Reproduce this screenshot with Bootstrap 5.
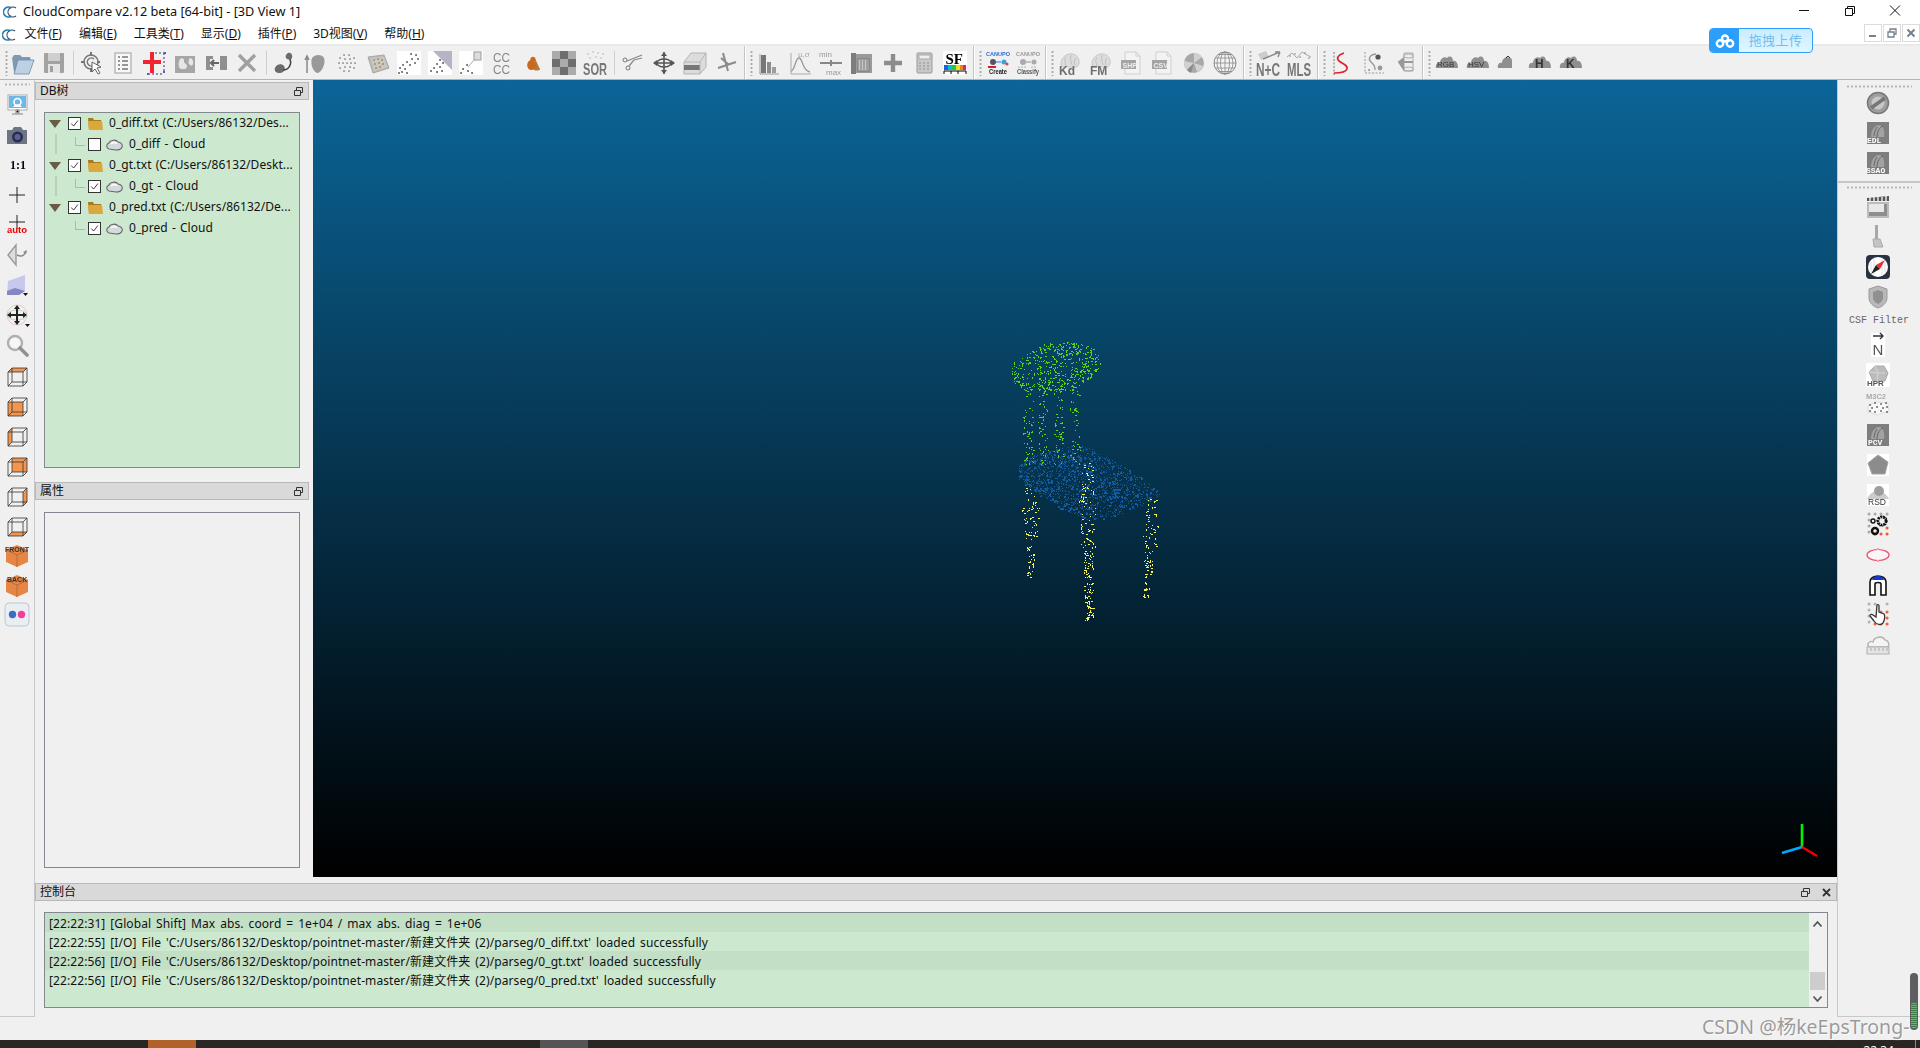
<!DOCTYPE html>
<html lang="zh">
<head>
  <meta charset="UTF-8" />
  <title>CloudCompare v2.12 beta [64-bit] - [3D View 1]</title>
  <link href="https://cdn.jsdelivr.net/npm/bootstrap@5.3.3/dist/css/bootstrap.min.css" rel="stylesheet">
  <style>
    html, body { height: 100%; }
    body {
      width: 1920px; height: 1048px; overflow: hidden; background: #f0f0f0; color: #111;
      font-family: "Noto Sans", "Noto Sans CJK SC", sans-serif; font-size: 12px; line-height: 1.2;
    }
    .ic { width: 24px; height: 24px; overflow: visible; display: block; filter: blur(.3px); }
    .title-row { height: 24px; background: #fff; padding-left: 3px; }
    .title-row .ttl { font-size: 12.7px; margin-left: 6px; color: #111; }
    .app-ic { width: 14px; height: 14px; flex: none; }
    .win-btn { position: absolute; top: 4px; width: 14px; height: 14px; }
    .menu-row { height: 22px; background: #fff; border-bottom: 2px solid #e9e9e9; padding-left: 2px; padding-top: 1px; }
    .menu-row .mi { padding: 0 8.5px; white-space: nowrap; }
    .menu-row u { text-underline-offset: 1px; }
    .top-tools { height: 34px; border-bottom: 1px solid #b4b4b4; padding-left: 4.500px; }
    .tbtn { width: 31px; flex: none; display: flex; align-items: center; justify-content: center; }
    .tbtn.narrow { width: 30px; }
    .sep-thin { width: 7px; flex: none; align-self: center; height: 24px; position: relative; }
    .sep-thin::after { content: ""; position: absolute; left: 3px; top: 0; bottom: 0; width: 1px; background: #cfcfcf; }
    .tool-break { width: 12px; flex: none; height: 100%; display: flex; padding-left: 2px; }
    .tool-break i { width: 1px; background: #c4c4c4; border-right: 1px solid #fff; display: block; box-sizing: content-box; }
    .grip-v { width: 3px; height: 26px; margin: 4px 0 0 4px;
      background: radial-gradient(circle, #a8a8a8 1px, transparent 1.2px) 0 0 / 3px 4px repeat-y; }
    .grip-h { height: 3px;
      background: radial-gradient(circle, #b4b4b4 1px, transparent 1.2px) 0 0 / 4px 3px repeat-x; }
    .work { height: 937px; }
    .left-tools { width: 35px; flex: none; border-right: 1px solid #c8c8c8; border-bottom: 1px solid #c8c8c8; }
    .left-tools .grip-h { margin: 3px 4px 4px 4px; }
    .left-tools .vbtn { height: 30px; display: flex; align-items: center; justify-content: center; }
    .right-tools { width: 83px; flex: none; border-left: 1px solid #c8c8c8; border-bottom: 1px solid #c8c8c8; }
    .right-tools .grip-h { margin: 0 8px; }
    .right-tools .vbtn { height: 30px; display: flex; align-items: center; justify-content: center; padding-right: 2px; }
    .right-tools .grp { padding-top: 5px; padding-bottom: 3px; }
    .right-tools .grp + .grp { border-top: 2px solid #c6c6c6; padding-top: 3px; }
    .right-tools .grp + .grp .grip-h { margin-bottom: 3px; }
    .csf { height: 18px; text-align: center; font: 10px/18px "Liberation Mono", monospace; color: #666; }
    .middle { width: 1802px; flex: none; }
    .upper { height: 797px; }
    .side-docks { width: 278px; flex: none; padding-top: 2px; }
    .dock-head { height: 18px; background: #d9d9d9; border: 1px solid #b8b8b8; padding: 0 4px;
      display: flex; align-items: center; justify-content: space-between; }
    .dock-head > span:first-child { padding-top: 1px; }
    .side-docks .dock-head { margin-right: 4px; }
    .dock-btn { width: 11px; height: 11px; display: block; }
    .dock-btn + .dock-btn { margin-left: 2px; }
    .tree-box { width: 256px; margin-left: 9px; border: 1px solid #828790; background: #cce8cf; }
    .tree-a { height: 356px; margin-top: 12px; margin-bottom: 14px; }
    .prop-box { height: 356px; margin-top: 12px; background: #f0f0f0; }
    .tree-row { height: 21px; display: flex; align-items: center; position: relative; white-space: nowrap; }
    .tree-row .arrow { width: 0; height: 0; margin-left: 4px; border: 6.5px solid transparent; border-top: 8px solid #6b5a45; border-bottom: 0; flex: none; }
    .cbx { width: 13px; height: 13px; border: 1px solid #333; background: #fff; flex: none; display: block; }
    .tree-row.p .cbx { margin-left: 7px; }
    .tree-row.c .cbx { margin-left: 43px; }
    .tree-row .lbl { margin-left: 6px; color: #111; letter-spacing: .05px; word-spacing: 1px; }
    .tree-row .fld { width: 16px; height: 14px; margin-left: 6px; flex: none; }
    .tree-row .cld { width: 17px; height: 12px; margin-left: 5px; flex: none; }
    .tree-row.c::before { content: ""; position: absolute; left: 30px; top: 3px; width: 10px; height: 9px;
      border-left: 1px solid #aabca8; border-bottom: 1px solid #aabca8; }
    .tree-row.v::after { content: ""; position: absolute; left: 10px; top: 0; width: 2px; height: 20px; background: #bcd0b8; }
    .view3d { flex: 1; position: relative; background: linear-gradient(to bottom, #0b6598, #000 100%); }
    .view3d svg { position: absolute; left: 0; top: 0; }
    .console-dock { height: 140px; padding-top: 6px; }
    .con-box { height: 96px; margin: 11px 9px 0 9px; border: 1px solid #828790; display: flex; background: #cce8cf; }
    .con-rows { flex: 1; }
    .con-line { height: 19px; padding: 1px 0 0 4px; line-height: 19px; white-space: nowrap; color: #111; letter-spacing: .09px; word-spacing: 1.7px; }
    .con-line.alt { background: #c3dfc6; }
    .con-scroll { width: 18px; background: #f0f0f0; position: relative; }
    .con-scroll .thumb { position: absolute; left: 1px; width: 15px; top: 59px; height: 18px; background: #cdcdcd; }
    .con-scroll svg { position: absolute; left: 3px; width: 11px; height: 8px; }
    .status-row { height: 23px; }
    .task-strip { height: 8px; background: #2a2624; overflow: hidden; color: #fff; }
    .task-orange { width: 48px; margin-left: 148px; background: #b0622a; }
    .task-gray { width: 48px; margin-left: 344px; background: #555; }
    .task-time { margin-left: auto; margin-right: 21px; font-size: 12px; line-height: 12px; margin-top: 5px; }
    .task-line { width: 1px; background: #8a8a8a; margin-right: 4px; }
    .upload-chip { position: absolute; left: 1709px; top: 28px; width: 104px; height: 25px; border: 1px solid #2b9ffb; border-radius: 4px;
      background: linear-gradient(to bottom, #c8edff, #e2f6ff); color: #74bdf0; font-size: 13px; overflow: hidden; display: flex; align-items: center; }
    .upload-chip .cap { width: 29px; height: 100%; background: #2b9ffb; flex: none; display: flex; align-items: center; justify-content: center; }
    .upload-chip .txt { flex: 1; text-align: center; letter-spacing: .4px; }
    .mdi-btns { position: absolute; top: 24px; right: 0; display: flex; gap: 1px; }
    .mdi-b { width: 18px; height: 18px; border: 1px solid #dcdcdc; background: #fff; display: flex; align-items: center; justify-content: center; }
    .mdi-b svg { width: 10px; height: 10px; }
    .watermark { position: absolute; left: 1702px; top: 1013px; font-size: 19.5px; line-height: 28px; color: rgba(125,125,125,.75);
      text-shadow: 1px 1px 1px rgba(255,255,255,.7); white-space: nowrap; }
    .vol-pill { position: absolute; left: 1910px; top: 973px; width: 8px; height: 57px; border-radius: 4px; background: #5e5e5e; padding: 30px 1px 2px; }
    .vol-pill div { height: 100%; background: repeating-linear-gradient(to bottom, #58c268 0 1px, #3d7a48 1px 2px); border-radius: 2px; }
  </style>
</head>
<body class="d-flex flex-column position-relative">

<div class="title-row d-flex align-items-center">
  <svg class="app-ic" viewBox="0 0 14 14"><path d="M13 3a5 5 0 1 0 0 8" fill="none" stroke="#3c4e5c" stroke-width="1.2"/><path d="M8.5 3a5 5 0 1 0 0 8" fill="none" stroke="#2d7fb5" stroke-width="1.7"/></svg>
  <span class="ttl">CloudCompare v2.12 beta [64-bit] - [3D View 1]</span>
</div>
<svg class="win-btn" style="left:1797px" viewBox="0 0 14 14"><path d="M2 6.5h10" stroke="#111" fill="none"/></svg>
<svg class="win-btn" style="left:1843px" viewBox="0 0 14 14"><path d="M2.5 4.5h7v7h-7zM4.5 4.5v-2h7v7h-2" stroke="#111" fill="none"/></svg>
<svg class="win-btn" style="left:1888px" viewBox="0 0 14 14"><path d="M2 1.5l10 10M12 1.5l-10 10" stroke="#111" fill="none"/></svg>

<div class="menu-row d-flex align-items-center">
  <svg class="app-ic" viewBox="0 0 14 14"><path d="M13 3a5 5 0 1 0 0 8" fill="none" stroke="#3c4e5c" stroke-width="1.2"/><path d="M8.5 3a5 5 0 1 0 0 8" fill="none" stroke="#2d7fb5" stroke-width="1.7"/></svg>
  <span class="mi">文件(<u>F</u>)</span>
  <span class="mi">编辑(<u>E</u>)</span>
  <span class="mi">工具类(<u>T</u>)</span>
  <span class="mi">显示(<u>D</u>)</span>
  <span class="mi">插件(<u>P</u>)</span>
  <span class="mi">3D视图(<u>V</u>)</span>
  <span class="mi">帮助(<u>H</u>)</span>
</div>

<div class="upload-chip">
  <span class="cap"><svg width="20" height="14" viewBox="0 0 20 14"><g fill="none" stroke="#fff" stroke-width="2.4"><circle cx="10" cy="4.5" r="3"/><circle cx="5" cy="9.5" r="3.2"/><circle cx="15" cy="9.5" r="3.2"/></g></svg></span>
  <span class="txt">拖拽上传</span>
</div>
<div class="mdi-btns">
  <span class="mdi-b"><svg viewBox="0 0 10 10"><path d="M1 8h7" stroke="#74808c" stroke-width="2"/></svg></span>
  <span class="mdi-b"><svg viewBox="0 0 10 10"><path d="M1 4h6v5H1zM3 4V1h6v5H7" stroke="#74808c" fill="none" stroke-width="1.3"/></svg></span>
  <span class="mdi-b"><svg viewBox="0 0 10 10"><path d="M1.5 1.5l7 7M8.5 1.5l-7 7" stroke="#74808c" stroke-width="2"/></svg></span>
</div>

<div class="top-tools d-flex align-items-center" id="topTools"></div>

<div class="work d-flex">
  <div class="left-tools" id="leftTools"></div>

  <div class="middle d-flex flex-column">
    <div class="upper d-flex">
      <div class="side-docks">
        <div class="dock-head"><span>DB树</span><svg class="dock-btn" viewBox="0 0 11 11"><path d="M1.5 4.5h6v5h-6zM3.5 4.5v-3h6v5h-2" fill="none" stroke="#333"/></svg></div>
        <div class="tree-box tree-a" id="dbTree"></div>
        <div class="dock-head"><span>属性</span><svg class="dock-btn" viewBox="0 0 11 11"><path d="M1.5 4.5h6v5h-6zM3.5 4.5v-3h6v5h-2" fill="none" stroke="#333"/></svg></div>
        <div class="tree-box prop-box"></div>
      </div>
      <div class="view3d">
        <svg width="1524" height="797" viewBox="313 80 1524 797" shape-rendering="crispEdges">
          <path id="ptsBlue" fill="#165a9e"/>
          <path id="ptsGreen" fill="#5cd414"/>
          <path id="ptsYellow" fill="#f4f056"/>
          <g shape-rendering="auto" stroke-width="2.6" fill="none">
            <path d="M1802 847V824" stroke="#00f000"/>
            <path d="M1802 847l15 9" stroke="#f00000"/>
            <path d="M1802 847l-20 6" stroke="#00a8ff"/>
          </g>
        </svg>
      </div>
    </div>
    <div class="console-dock">
      <div class="dock-head">
        <span>控制台</span>
        <span class="d-flex gap-2">
          <svg class="dock-btn" viewBox="0 0 11 11"><path d="M1.5 4.5h6v5h-6zM3.5 4.5v-3h6v5h-2" fill="none" stroke="#333"/></svg>
          <svg class="dock-btn" viewBox="0 0 11 11"><path d="M2 2l7 7M9 2l-7 7" fill="none" stroke="#333" stroke-width="1.8"/></svg>
        </span>
      </div>
      <div class="con-box">
        <div class="con-rows">
          <div class="con-line alt">[22:22:31] [Global Shift] Max abs. coord = 1e+04 / max abs. diag = 1e+06</div>
          <div class="con-line">[22:22:55] [I/O] File 'C:/Users/86132/Desktop/pointnet-master/新建文件夹 (2)/parseg/0_diff.txt' loaded successfully</div>
          <div class="con-line alt">[22:22:56] [I/O] File 'C:/Users/86132/Desktop/pointnet-master/新建文件夹 (2)/parseg/0_gt.txt' loaded successfully</div>
          <div class="con-line">[22:22:56] [I/O] File 'C:/Users/86132/Desktop/pointnet-master/新建文件夹 (2)/parseg/0_pred.txt' loaded successfully</div>
        </div>
        <div class="con-scroll">
          <svg style="top:7px" viewBox="0 0 11 8"><path d="M1.5 6.5 5.5 2l4 4.5" fill="none" stroke="#555" stroke-width="1.8"/></svg>
          <div class="thumb"></div>
          <svg style="top:82px" viewBox="0 0 11 8"><path d="M1.5 1.5 5.5 6l4-4.5" fill="none" stroke="#555" stroke-width="1.8"/></svg>
        </div>
      </div>
    </div>
  </div>

  <div class="right-tools" id="rightTools"></div>
</div>

<div class="status-row"></div>
<div class="task-strip d-flex">
  <div class="task-orange"></div>
  <div class="task-gray"></div>
  <div class="task-time">22:34</div>
  <div class="task-line"></div>
</div>

<div class="watermark">CSDN @杨keEpsTrong-</div>
<div class="vol-pill"><div></div></div>

<script>
const txt = (s, x, y, size, fill, weight, fam, len) =>
  `<text x="${x}" y="${y}" font-size="${size}" fill="${fill}" font-weight="${weight || 'bold'}" font-family="${fam || 'Liberation Sans'}"${len ? ` textLength="${len}" lengthAdjust="spacingAndGlyphs"` : ''}>${s}</text>`;
const dots = (d, c, w) => `<path d="${d}" stroke="${c || '#555'}" stroke-width="${w || 1.8}" stroke-linecap="round" fill="none"/>`;
const cubeWire = '<path d="M3 9h15v14H3zM7 5h15v14H7zM3 9l4-4M18 9l4-4M18 23l4-4M3 23l4-4" fill="none" stroke="#333" stroke-width=".8"/>';
const cube = shape => `<path d="${shape}" fill="#f2964f"/>` + cubeWire;
const brain = '<path d="M4 16C1 11 5 4 11 3c7-1 11 4 10 10l-2 3z" fill="#dcdcdc" stroke="#c8c8c8"/><path d="M8 6c-2 3-1 6 0 9M13 4c-1 4 0 7 1 10M18 7c-2 2-2 4-1 7" stroke="#c0c0c0" fill="none"/>';
const doc = t => `<path d="M5 1h11l4 4v18H5z" fill="#f3f3f3" stroke="#cfcfcf"/><path d="M16 1v4h4" fill="none" stroke="#cfcfcf"/><rect x="1" y="9" width="15" height="9" fill="#a4a4a4"/>` + txt(t, 2.5, 16.5, 7, '#eee');
const mtn = '<path d="M1 17c-1-4 2-6 4-5 0-4 4-7 7-5 3-3 6-1 6 3 3-1 5 2 5 7z" fill="#8f8f8f"/>';
const thumb = (t, x) => `<rect x="1" y="1" width="22" height="22" fill="#7e7e7e"/><path d="M5 16c0-6 3-12 8-12 4 0 6 5 5 12z" fill="#a2a2a2"/><path d="M11 16c0-6 3-10 6-11M8 15c0-4 2-7 3-9" stroke="#666" fill="none"/>` + txt(t, x, 22, 8, '#fff', 'bold', 'Liberation Mono');
const hexBox = '<path d="M12 2 23 7v12l-11 5L1 19V7z" fill="#e58646"/><path d="M12 12 23 7M12 12 1 7M12 12v12" stroke="#c06a30" fill="none"/>';
const icons = {
  folder: '<path d="M3 21 1 7l2-3h6l2 2h8l1 4z" fill="#7f9ab0"/><path d="M3 23 7 9h16l-5 14z" fill="#bcd2e4" stroke="#6a8aa6" stroke-width=".8"/>',
  save: '<rect x="2" y="2" width="20" height="20" rx="1" fill="#a2a2a2"/><rect x="6" y="2" width="12" height="8" fill="#cfcfcf"/><rect x="6" y="13" width="12" height="9" fill="#e4e4e4"/><rect x="8" y="15" width="3" height="6" fill="#a0a0a0"/>',
  cloudsel: '<circle cx="11" cy="11" r="7" fill="none" stroke="#777" stroke-width="1.5"/><path d="M11 1v4M11 17v4M1 11h4M17 11h3" stroke="#777" stroke-width="2"/><path d="M14 8a4 4 0 1 0 0 6" fill="none" stroke="#777" stroke-width="1.5"/><path d="M12 11l9 5-4 1 3 5-2 1-3-5-3 3z" fill="#fff" stroke="#555" stroke-width=".9"/>',
  list: '<rect x="4" y="2" width="16" height="20" fill="#f7f7f7" stroke="#9c9c9c"/><path d="M7 6h2M7 10h2M7 14h2M7 18h2M11 6h6M11 10h6M11 14h6M11 18h6" stroke="#777" stroke-width="1.6"/>',
  redcross: '<path d="M13 2h10M22 2v20M6 23h16" stroke="#33306a" stroke-dasharray="2 2" fill="none"/><path d="M8 1h4v8h7v4h-7v9H8v-9H1V9h7z" fill="#ee2530"/><path d="M22 1h2v2h-2zM21 20h2v2h-2zM5 22h2v2H5z" fill="#5a5ad0"/>',
  merge: '<rect x="2" y="5" width="20" height="17" fill="#a6a6a6"/><path d="M7 8c2-2 5 0 4 2s4 3 3 6-7 3-8 0 0-6 1-8zM17 7c2 0 4 3 3 6s-3 1-4 0 0-6 1-6z" fill="#e6e6e6"/>',
  leave: '<path d="M2 5h7v3H6v8h3v3H2zM23 5h-7v14h7V5z" fill="#8f8f8f"/><path d="M15 12H7M10 9l-3 3 3 3" stroke="#666" stroke-width="2" fill="none"/>',
  x: '<path d="M4 4l16 16M20 4 4 20" stroke="#a0a0a0" stroke-width="3.4"/>',
  blobs: '<path d="M15 2c3-1 5 2 4 5-1 2-4 2-6 0-1-2 0-4 2-5zM2 17c1-4 7-5 9-2 2 3 0 7-4 7s-6-2-5-5z" fill="#6c6c6c"/><path d="M17 8c2 5-1 11-7 11" stroke="#444" fill="none" stroke-width="1.5"/>',
  upblob: '<path d="M3 22V7M1 9l2-4 2 4" stroke="#888" fill="none" stroke-width="1.5"/><path d="M8 7c3-4 10-4 12 0 2 5-2 14-6 15-5 0-8-10-6-15z" fill="#999"/>',
  ringdots: dots('M9 4h.1M14 4h.1M5 7h.1M10 8h.1M15 8h.1M19 7h.1M4 12h.1M8 12h.1M12 12h.1M16 12h.1M20 12h.1M5 17h.1M10 16h.1M15 16h.1M19 17h.1M9 20h.1M14 20h.1', '#777', 1.7),
  tiltdots: '<path d="M2 6l16-2 5 13-16 5z" fill="#bdbdbd" stroke="#a5a5a5"/><path d="M5 7l13-1 3 10-13 4z" fill="#cfc6b8"/>' + dots('M8 9h.1M12 8h.1M16 9h.1M9 13h.1M13 12h.1M17 13h.1M10 17h.1M14 16h.1', '#666', 1.5),
  whitedots: '<rect x="0" y="0" width="24" height="24" fill="#fff"/>' + dots('M14 3h.1M19 4h.1M21 8h.1M15 8h.1M10 11h.1M18 12h.1M6 14h.1M13 14h.1M3 17h.1M8 18h.1M5 21h.1M10 22h.1M2 22h.1', '#5a5a5a', 1.8),
  tridots: '<rect x="0" y="0" width="24" height="24" fill="#fff"/><path d="M5 0h19v19z" fill="#b4b4c4"/>' + dots('M12 9h.1M15 12h.1M9 13h.1M12 16h.1M6 17h.1M3 20h.1M9 21h.1M14 20h.1', '#555', 1.8),
  framedots: '<rect x="0" y="0" width="24" height="24" fill="#fff"/><rect x="15" y="1" width="7" height="8" fill="#ddd" stroke="#999"/><path d="M15 9l-6 7" stroke="#aaa"/>' + dots('M8 14h.1M4 18h.1M9 20h.1M2 22h.1M13 22h.1', '#555', 1.8),
  cccc: txt('CC', 3, 11, 12, '#888', 'normal', null, 17) + txt('CC', 3, 23, 12, '#888', 'normal', null, 17),
  cone: '<g transform="translate(4 4) scale(.72)"><path d="M14 5l7 15c-2 2-8 2-9 0z" fill="#b87a3a"/><ellipse cx="9" cy="14" rx="6" ry="7" fill="#c9691f"/><circle cx="11" cy="6" r="3.5" fill="#c9691f"/></g>',
  checker: '<rect width="24" height="24" fill="#6e6e6e"/><path d="M0 0h8v8H0zM16 0h8v8h-8zM8 8h8v8H8zM0 16h8v8H0zM16 16h8v8h-8z" fill="#ababab"/>',
  sor: dots('M5 3h.1M10 1h.1M15 2h.1M20 3h.1M7 7h.1M13 6h.1M18 7h.1', '#aaa', 1.3) + txt('SOR', 0, 24, 16.5, '#777', 'bold', null, 24),
  scissors: '<circle cx="4" cy="9" r="2" fill="none" stroke="#777"/><circle cx="7" cy="17" r="2" fill="none" stroke="#777"/><path d="M6 10l15-6M8 15l5-6 8-2" stroke="#888" fill="none" stroke-width="1.2"/>',
  move: '<path d="M12 1v22M2 12h20" stroke="#555" stroke-width="1.6"/><path d="M12 1l-3 4h6zM12 23l-3-4h6zM1 12l4-3v6zM23 12l-4-3v6z" fill="#555"/><ellipse cx="12" cy="12" rx="7" ry="4" fill="none" stroke="#555" stroke-width="1.5"/>',
  slab: '<path d="M1 11l7-9h15v14l-6 7H1z" fill="#dcdcdc" stroke="#b4b4b4"/><path d="M1 14h16v5H1z" fill="#777"/><path d="M17 23V11M1 11h16l6-9" fill="none" stroke="#b4b4b4"/>',
  angle: '<path d="M9 2l5 18M4 17 22 11M7 7l7 6" stroke="#8a8a8a" stroke-width="2" fill="none"/>',
  hist: '<path d="M3 3v20h19" stroke="#999" fill="none"/><rect x="4" y="4" width="5" height="18" fill="#777"/><rect x="10" y="11" width="4" height="11" fill="#8c8c8c"/><rect x="15" y="16" width="4" height="6" fill="#9c9c9c"/>',
  curve: '<path d="M3 2v21h20" stroke="#aaa" fill="none"/><path d="M3 20c4 0 4-13 8-13s3 13 11 14" stroke="#999" fill="none" stroke-width="1.3"/>' + txt('µ,σ', 10, 6, 8, '#aaa', 'normal'),
  minmax: txt('min', 0, 6, 8, '#999', 'normal') + txt('max', 7, 24, 8, '#999', 'normal') + '<path d="M1 12h22M12 9v6" stroke="#888" stroke-width="2"/>',
  trash: '<rect x="2" y="3" width="20" height="19" fill="#9a9a9a"/><rect x="8" y="8" width="11" height="12" fill="#c8c8c8" stroke="#777"/><path d="M11 9v10M14 9v10M17 9v10" stroke="#777"/><rect x="1" y="2" width="5" height="21" fill="#7c7c7c"/>',
  plus: '<path d="M12 3v18M3 12h18" stroke="#8c8c8c" stroke-width="4.4"/>',
  calc: '<rect x="5" y="2" width="15" height="20" rx="1" fill="#c8c8c8" stroke="#9a9a9a"/><rect x="7" y="4" width="11" height="4" fill="#eee" stroke="#aaa"/>' + dots('M8 12h.1M12 12h.1M16 12h.1M8 15h.1M12 15h.1M16 15h.1M8 18h.1M12 18h.1M16 18h.1', '#888', 1.5),
  sf: '<rect x="0" y="0" width="24" height="24" fill="#fff"/>' + txt('SF', 2.5, 13, 15, '#000', 'bold', 'Liberation Serif') + '<rect x="1" y="14" width="4" height="5" fill="#1565e0"/><rect x="5" y="14" width="4" height="5" fill="#12b8d8"/><rect x="9" y="14" width="4" height="5" fill="#18d030"/><rect x="13" y="14" width="4" height="5" fill="#e8e020"/><rect x="17" y="14" width="3" height="5" fill="#f08018"/><rect x="20" y="14" width="3" height="5" fill="#e02070"/><path d="M1 23v-3h22v3M8 20v3M15 20v3" stroke="#000" fill="none"/>',
  create: txt('CANUPO', 0, 5, 5.5, '#2f6fc8', 'bold', null, 24) + '<circle cx="7" cy="11" r="3" fill="#556"/><path d="M10 11h5" stroke="#2f6fc8"/><circle cx="18" cy="11" r="2.5" fill="#3aa0e0"/><circle cx="21" cy="13" r="1.5" fill="#e04040"/><rect x="2" y="15" width="8" height="2" fill="#d02030"/>' + txt('Create', 3, 23, 6.5, '#222', 'bold', null, 18),
  classify: txt('CANUPO', 0, 5, 5.5, '#999', 'bold', null, 24) + '<circle cx="7" cy="11" r="3" fill="#aaa"/><path d="M10 11h5" stroke="#999"/><circle cx="18" cy="11" r="2.5" fill="#aaa"/>' + dots('M3 16h.1M6 16h.1M9 16h.1M16 16h.1M19 16h.1', '#777', 1.2) + txt('Classify', 1, 23, 6.5, '#555', 'bold', null, 22),
  kd: brain + txt('Kd', 1, 24, 12, '#6e6e6e'),
  fm: brain + txt('FM', 1, 24, 12, '#6e6e6e'),
  shp: doc('SHP'),
  csv: doc('CSV'),
  pie: '<circle cx="12" cy="12" r="10" fill="#a8a8a8"/><path d="M12 12V2a10 10 0 0 1 8 4zM12 12l9 3a10 10 0 0 1-6 6zM12 12l-7 7a10 10 0 0 1-3-9z" fill="#d0d0d0"/><path d="M12 12l-3 10a10 10 0 0 1-4-3z" fill="#8a8a8a"/>',
  globe: '<circle cx="12" cy="12" r="11" fill="#f4f4f4" stroke="#888"/><path d="M1 12h22M2 7h20M2 17h20M5 3.5h14M5 20.5h14M12 1v22" stroke="#888" fill="none" stroke-width=".8"/><ellipse cx="12" cy="12" rx="4.5" ry="11" fill="none" stroke="#888" stroke-width=".8"/><ellipse cx="12" cy="12" rx="8" ry="11" fill="none" stroke="#888" stroke-width=".8"/>',
  nc: '<path d="M2 3l8-3 3 6-8 3z" fill="#ccc"/><path d="M7 8l17-7M24 1h-5M24 1l-2 5" stroke="#888" stroke-width="1.4" fill="none"/>' + txt('N+C', 0, 25, 19, '#777', 'bold', null, 24),
  mls: '<path d="M0 6l5-4 5 5 5-6 5 3 4 2" stroke="#aaa" fill="none"/>' + dots('M3 5h.1M8 3h.1M13 6h.1M18 2h.1M22 7h.1', '#777', 1.4) + txt('MLS', 0, 25, 19, '#777', 'bold', null, 24),
  reds: '<path d="M4 1v24" stroke="#777" stroke-dasharray="2 1.5" fill="none"/><path d="M14 2C8 4 6 7 9 10c4 3 9 4 8 8-1 3-6 4-13 4" stroke="#e0202a" stroke-width="1.7" fill="none"/>',
  sdots: '<path d="M4 1v21h19" stroke="#999" stroke-dasharray="2 1.5" fill="none"/><path d="M15 3C8 4 7 8 10 11s4 4 4 8" stroke="#999" stroke-width="1.4" fill="none"/><circle cx="17" cy="6" r="2.6" fill="#555"/><circle cx="19" cy="17" r="2.4" fill="#999"/>' + dots('M8 19h.1', '#999', 2),
  rotdoc: '<path d="M12 2h9v18h-9z" fill="#eee" stroke="#aaa"/><ellipse cx="16.5" cy="5" rx="5" ry="2" fill="none" stroke="#aaa"/><ellipse cx="16.5" cy="18" rx="5" ry="2" fill="none" stroke="#aaa"/><path d="M21 11H7M7 11l4-3v9z" stroke="#999" fill="#999" stroke-width="2"/>',
  rgb: mtn + txt('RGB', 2, 16, 8, '#333', 'normal'),
  hsv: mtn + txt('HSV', 2, 16, 8, '#333', 'normal'),
  mtnS: '<path d="M1 17c-1-4 2-6 4-5 0-4 4-7 7-5 2-1 3 1 3 3v7z" fill="#8f8f8f"/><path d="M9 7l2-2 2 2" stroke="#333" fill="none"/>',
  hh: mtn + txt('H', 7, 17, 12, '#333'),
  kk: mtn + txt('K', 7, 17, 12, '#333'),
  monitor: '<rect x="3" y="2" width="19" height="15" fill="#fff" stroke="#aaa"/><rect x="4" y="3" width="17" height="12" fill="#6cb8e8"/><path d="M8 14a5 5 0 0 1 9 0z" fill="#fff"/><circle cx="12.5" cy="9" r="3.5" fill="none" stroke="#fff" stroke-width="1.6"/><path d="M11 17h3v3h-3zM7 21h11" stroke="#a8a8a8" stroke-width="1.5"/>',
  camera: '<path d="M2 7h5l2-3h7l2 3h4v14H2z" fill="#6d7486"/><circle cx="12.5" cy="14" r="5.5" fill="#2a2e48"/><circle cx="12.5" cy="14" r="3" fill="#5c6098"/>',
  ones: '<text x="5" y="16" font-size="12" font-weight="bold" fill="#110018" font-family="Liberation Serif">1:1</text>',
  cross: '<path d="M12 4v16M4 12h16" stroke="#222" stroke-width="1"/>',
  auto: '<path d="M12 2v14M4 9h16" stroke="#222" stroke-width="1"/>' + txt('auto', 2, 20, 9.5, '#f00000'),
  arrow3d: '<path d="M11 2v20L3 12z" fill="#ddd" stroke="#999" stroke-width="1.4"/><path d="M12 12c4 2 7 1 9-3" fill="none" stroke="#888" stroke-width="1.5"/><path d="M22 7l-1 4-3-2z" fill="#888"/>',
  violet: '<path d="M3 8l17-6v16l-6 4H2z" fill="#c8c8ec"/><path d="M2 18l8-3 10 3-6 4H2z" fill="#8686c4"/><path d="M18 20h5l-2.5 3z" fill="#111"/>',
  rotate: '<circle cx="12" cy="12" r="10" fill="#f2f2f2" stroke="#e8c4cc"/><ellipse cx="12" cy="12" rx="10" ry="5" fill="none" stroke="#b8d8b8"/><path d="M12 3v18M3 12h18" stroke="#222" stroke-width="2"/><path d="M12 2l-3 4h6zM12 22l-3-4h6zM2 12l4-3v6zM22 12l-4-3v6z" fill="#222"/><path d="M20 21h5l-2.5 3z" fill="#111"/>',
  magnifier: '<circle cx="10" cy="10" r="7" fill="#f6f6f6" stroke="#b0b0b0" stroke-width="2.4"/><path d="M15 15l7 7" stroke="#909090" stroke-width="3.6" stroke-linecap="round"/>',
  cubeTop: cube('M3 9l4-4h15l-4 4z'),
  cubeFront: cube('M3 9h15v14H3z'),
  cubeLeft: cube('M3 9l4-4v14l-4 4z'),
  cubeBack: cube('M7 5h15v14H7z'),
  cubeRight: cube('M18 9l4-4v14l-4 4z'),
  cubeBottom: cube('M3 23l4-4h15l-4 4z'),
  front: hexBox + txt('FRONT', 0, 9, 7, '#333'),
  back: hexBox + txt('BACK', 2, 9, 7, '#333'),
  flickr: '<rect x="0" y="0" width="24" height="23" rx="4" fill="#e8eef2" stroke="#bcc8d0"/><circle cx="7.5" cy="11.5" r="3.7" fill="#3a6fc0"/><circle cx="16.5" cy="11.5" r="3.7" fill="#f0409a"/>',
  ban: '<circle cx="12" cy="12" r="10.5" fill="#9e9e9e" stroke="#777" stroke-width="1.5"/><circle cx="12" cy="12" r="6.5" fill="#c8c8c8"/><path d="M5 17 19 7" stroke="#777" stroke-width="3.6"/>',
  edl: thumb('EDL', 1),
  ssao: thumb('SSAO', 0),
  clap: '<rect x="1" y="7" width="22" height="16" fill="#bcbcbc"/><rect x="3" y="9" width="18" height="12" fill="#8e8e8e"/><path d="M3 9h15v8H3z" fill="#e8e8e8"/><path d="M1 3 23 1v5H1z" fill="#555"/><path d="M4 2v4M8 2v4M12 2v4M16 2v4M20 1v5" stroke="#eee" stroke-width="1.4"/>',
  brush: '<rect x="9" y="0" width="3" height="14" fill="#a8a8a8"/><path d="M7 14h7l3 8H8z" fill="#c4c4c4" stroke="#aaa"/>',
  compass: '<rect x="0" y="0" width="24" height="24" rx="4" fill="#2a3242"/><circle cx="12" cy="12" r="10" fill="#fff"/><path d="M5 7v10M8 4v16M16 4v16M19 7v10" stroke="#ddd"/><path d="M19 5l-5 9-4-4z" fill="#e83030"/><path d="M5 19l5-9 4 4z" fill="#222"/>',
  shield: '<path d="M12 1l9 3v9c0 5-5 9-9 10-4-1-9-5-9-10V4z" fill="#b8b8b8" stroke="#9a9a9a"/><path d="M12 5l5 2v6c0 3-3 5-5 6-2-1-5-3-5-6V7z" fill="#909090"/>',
  nn: '<rect x="5" y="0" width="14" height="24" fill="#fff"/><path d="M7 3h10M14 0l3 3-3 3" stroke="#333" stroke-width="1.4" fill="none"/>' + txt('N', 6.5, 22, 15, '#555', 'normal'),
  hpr: '<rect x="0" y="0" width="24" height="24" fill="#fff"/><path d="M3 9l6-6h9l4 7-3 8H7z" fill="#bcbcbc" stroke="#aaa"/><path d="M9 3l3 7h7M3 9l9 1-1 8" stroke="#d6d6d6" fill="none"/>' + txt('HPR', 1, 23, 8, '#555'),
  m3c2: txt('M3C2', 0, 6, 7.5, '#aaa') + '<path d="M2 13l8-4 12 1 1 8-12 4-9-3z" fill="#f8f8f8" stroke="#ddd"/>' + dots('M4 12h.1M9 10h.1M15 11h.1M20 10h.1M6 15h.1M11 14h.1M17 15h.1M21 14h.1M4 18h.1M9 19h.1M15 18h.1M21 19h.1', '#666', 1.8),
  pcv: thumb('PCV', 2),
  penta: '<rect x="1" y="1" width="22" height="22" fill="#fff"/><path d="M12 2l10 7-3 12H6L2 10z" fill="#8c8c8c" stroke="#a4a4a4"/>',
  rsd: '<rect x="1" y="1" width="22" height="22" fill="#fff"/><path d="M1 16c2-5 6-8 11-8s9 4 11 8z" fill="#ccc"/><circle cx="13" cy="8" r="5" fill="#9e9e9e"/>' + txt('RSD', 2, 22, 8.5, '#333', 'normal'),
  gears: dots('M3 1h.1M9 1h.1M15 1h.1M21 1h.1M3 7h.1M3 19h.1M3 13h.1', '#aaa', 3) + dots('M15 21h.1M21 21h.1M21 15h.1M9 21h.1', '#f05a30', 3) + '<circle cx="16" cy="8" r="4" fill="none" stroke="#111" stroke-width="2.6" stroke-dasharray="2 .8"/><circle cx="16" cy="8" r="5" fill="none" stroke="#111" stroke-width="1.2" stroke-dasharray="1.5 1.5"/><circle cx="9" cy="18" r="3" fill="none" stroke="#111" stroke-width="2.4"/><circle cx="7" cy="8" r="2" fill="none" stroke="#111" stroke-width="1.4"/>',
  ellipse: '<ellipse cx="12" cy="12" rx="11" ry="5.5" fill="#fdf4f6" stroke="#e8506e" stroke-width="1.2"/><path d="M11 5h2v2h-2zM11 17h2v2h-2z" fill="#f4a0b0"/>',
  arch: '<path d="M4 22V9c0-4 4-6 8-6s8 2 8 6v13h-5V11c0-2-6-2-6 0v11z" fill="#fff" stroke="#111" stroke-width="1.6"/><path d="M6 7c1-3 3-4 6-4s5 1 6 4z" fill="#1438d8"/>',
  hand: dots('M3 1h.1M9 1h.1M21 1h.1M3 7h.1M3 13h.1M3 19h.1', '#b4b4b4', 3) + dots('M15 9h.1M21 9h.1M21 15h.1M21 21h.1M15 21h.1M9 21h.1', '#f0623c', 3) + '<path d="M11 2c1-1 2 0 2 1v6l5 2c1 1 1 6-1 9-3 3-7 1-9-2l-4-5c0-2 2-2 3-1l3 2z" fill="#fff" stroke="#333" stroke-width="1.3"/>',
  cloudruler: '<path d="M3 14c-3-3 1-7 4-5 1-5 9-7 12-2 3 0 5 4 3 7z" fill="#f4f4f4" stroke="#b4b4b4" stroke-width="1.4"/><rect x="1" y="14" width="22" height="7" fill="#e4e4e4" stroke="#b0b0b0"/><path d="M5 15v3M9 15v3M13 15v3M17 15v3M21 15v3" stroke="#aaa"/>'
};

const ic = name => `<svg class="ic" viewBox="0 0 24 24">${icons[name]}</svg>`;
const topList = ['grip', 'folder','save','|','cloudsel','list','redcross','merge','leave','x','|','blobs','upblob','ringdots','tiltdots','whitedots','tridots','framedots','cccc','cone','checker','sor','|','scissors','move','slab','angle','#','hist','curve','minmax','trash','plus','calc','sf','#','create','classify','#','kd','fm','shp','csv','pie','globe','#','nc','mls','#','reds','sdots','rotdoc','#','rgb','hsv','mtnS','hh','kk'];
document.getElementById('topTools').innerHTML = topList.map(n => {
  if (n === 'grip') return '<div class="grip-v m-0"></div>';
  if (n === '|') return '<div class="sep-thin"></div>';
  if (n === '#') return '<div class="tool-break"><i></i><div class="grip-v"></div></div>';
  const narrow = n === 'create' || n === 'classify' ? ' narrow' : '';
  return `<div class="tbtn${narrow}">${ic(n)}</div>`;
}).join('');

const leftList = ['monitor','camera','ones','cross','auto','arrow3d','violet','rotate','magnifier','cubeTop','cubeFront','cubeLeft','cubeBack','cubeRight','cubeBottom','front','back','flickr'];
document.getElementById('leftTools').innerHTML = '<div class="grip-h"></div>' +
  leftList.map(n => `<div class="vbtn">${ic(n)}</div>`).join('');

const r1 = ['ban','edl','ssao'];
const r2 = ['clap','brush','compass','shield','CSF','nn','hpr','m3c2','pcv','penta','rsd','gears','ellipse','arch','hand','cloudruler'];
const vbtns = l => l.map(n => n === 'CSF' ? '<div class="csf">CSF Filter</div>' : `<div class="vbtn">${ic(n)}</div>`).join('');
document.getElementById('rightTools').innerHTML =
  `<div class="grp"><div class="grip-h"></div>${vbtns(r1)}</div><div class="grp"><div class="grip-h"></div>${vbtns(r2)}</div>`;

// db tree
const folderSvg = '<svg class="fld" viewBox="0 0 16 14"><path d="M1 1h5l1 2h7l1 10H2z" fill="#a87a20"/><path d="M1 4h14l1 9H2z" fill="#dca83c"/></svg>';
const cloudSvg = '<svg class="cld" viewBox="0 0 17 12"><path d="M3 10C0 9 0 5 3 4c1-3 7-4 9-1 3 0 5 3 4 5-1 3-4 3-6 3z" fill="#d4d9de" stroke="#666" stroke-width="1.1"/><path d="M5 5c2-2 5-2 6 0" fill="none" stroke="#fff" stroke-width="1.5"/></svg>';
const check = on => `<svg class="cbx" viewBox="0 0 13 13">${on ? '<path d="M2.5 6.5 5.5 9.5 10.5 3" fill="none" stroke="#333" stroke-width="1.1"/>' : ''}</svg>`;
const tree = [
  ['0_diff.txt (C:/Users/86132/Des...', '0_diff - Cloud', false, true],
  ['0_gt.txt (C:/Users/86132/Deskt...', '0_gt - Cloud', true, true],
  ['0_pred.txt (C:/Users/86132/De...', '0_pred - Cloud', true, false]
];
document.getElementById('dbTree').innerHTML = tree.map(t => `
  <div class="tree-row p"><span class="arrow"></span>${check(true)}${folderSvg}<span class="lbl">${t[0]}</span></div>
  <div class="tree-row c${t[3] ? ' v' : ''}">${check(t[2])}${cloudSvg}<span class="lbl">${t[1]}</span></div>`).join('');

// chair point cloud
let seed = 20240611;
const rnd = () => (seed = (seed * 1664525 + 1013904223) >>> 0) / 4294967296;
const px = (x, y, w, h) => `M${Math.round(x)} ${Math.round(y)}h${w}v${h}h-${w}z`;
const size = () => { const r = rnd(); return r < .55 ? [1, 1] : r < .8 ? [2, 1] : [1, 2]; };
const poly = [[105,420],[130,385],[250,345],[330,350],[400,390],[480,440],[545,490],[500,520],[400,560],[300,570],[215,520],[120,460]]
  .map(p => [980 + p[0] / 3, 330 + p[1] / 3]);
const inside = (x, y) => {
  let c = false;
  for (let i = 0, j = poly.length - 1; i < poly.length; j = i++) {
    const [xi, yi] = poly[i], [xj, yj] = poly[j];
    if ((yi > y) !== (yj > y) && x < (xj - xi) * (y - yi) / (yj - yi) + xi) c = !c;
  }
  return c;
};
let blue = '', green = '', yellow = '';
for (let n = 0; n < 1400;) {
  const x = 1014 + rnd() * 150, y = 443 + rnd() * 80;
  if (!inside(x, y)) continue;
  const s = rnd() < .12 ? [2, 2] : [1, 1];
  blue += px(x, y, s[0], s[1]);
  n++;
}
for (let n = 0; n < 480;) {
  const u = rnd() * 2 - 1, v = rnd() * 2 - 1;
  if (u * u + v * v > 1) continue;
  const s = size();
  green += px(1055 + u * 45, 367 + v * 25 - u * 6, s[0], s[1]);
  n++;
}
[[1028, 62], [1043, 62], [1058, 62], [1075, 55]].forEach(([cx, cnt]) => {
  for (let i = 0; i < cnt; i++) {
    const s = size();
    green += px(cx + (rnd() - .5) * 10, 385 + rnd() * 80, s[0], s[1]);
  }
});
const leg = (x0, x1, y0, y1, hw0, hw1, cnt) => {
  for (let i = 0; i < cnt; i++) {
    const t = rnd(), s = size();
    const bulge = t > .2 && t < .55 ? 1.5 : 1;
    yellow += px(x0 + (x1 - x0) * t + (rnd() - .5) * 2 * (hw0 + (hw1 - hw0) * t) * bulge, y0 + (y1 - y0) * t, s[0], s[1]);
  }
};
leg(1031, 1030, 487, 578, 7, 3, 90);
leg(1087, 1089, 463, 620, 6, 4, 200);
leg(1152, 1146, 498, 597, 6, 3, 100);
document.getElementById('ptsBlue').setAttribute('d', blue);
document.getElementById('ptsGreen').setAttribute('d', green);
document.getElementById('ptsYellow').setAttribute('d', yellow);
</script>
<script src="https://cdn.jsdelivr.net/npm/bootstrap@5.3.3/dist/js/bootstrap.bundle.min.js"></script>
</body>
</html>
